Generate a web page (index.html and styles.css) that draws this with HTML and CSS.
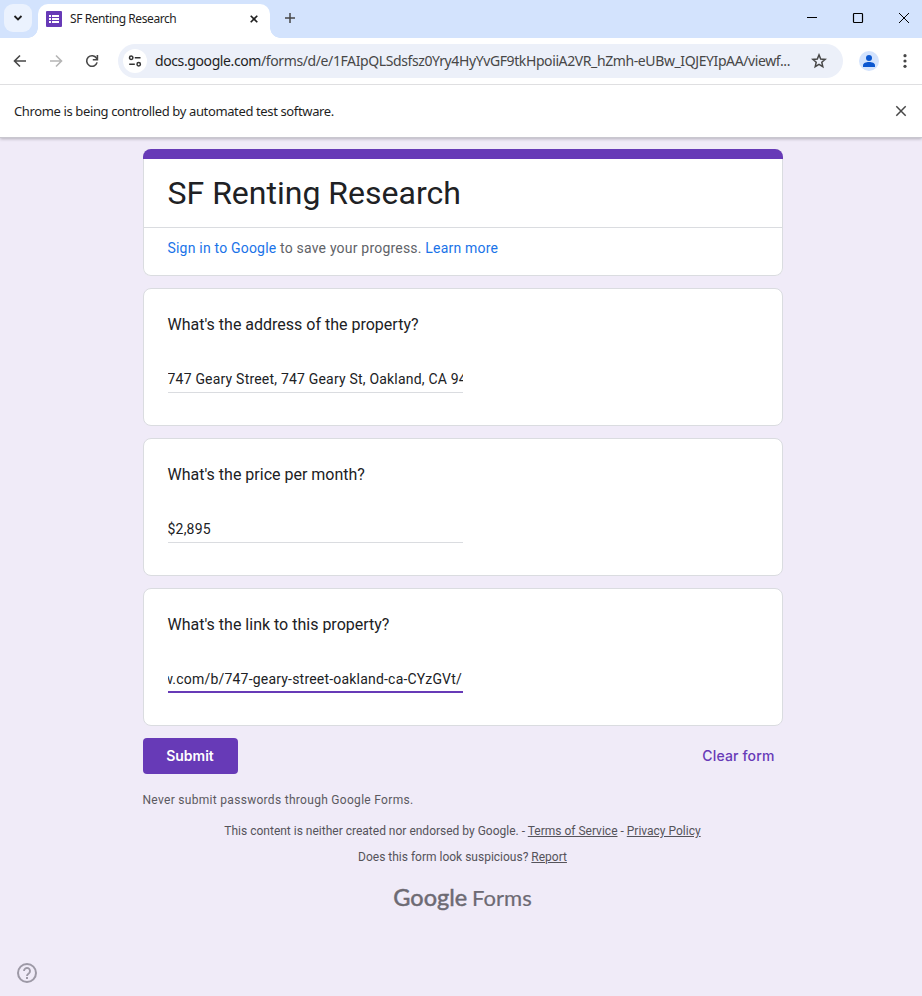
FILE: index.html
```html
<!DOCTYPE html>
<html lang="en">
<head>
<meta charset="utf-8">
<title>SF Renting Research</title>
<link rel="stylesheet" href="styles.css">
</head>
<body>
<header class="browser">
  <div class="tabstrip">
    <button class="tab-search" aria-label="Search tabs"><svg width="10" height="6" viewBox="0 0 10 6"><path d="M1.500 1 5 4.400 8.500 1" fill="none" stroke="#1f1f1f" stroke-width="1.800"/></svg></button>
    <div class="tab">
      <svg class="favicon" width="16" height="16" viewBox="0 0 16 16"><rect width="16" height="16" rx="1" fill="#673ab7"/><path d="M3 4h2v2H3zM6 4h7v2H6zM3 7h2v2H3zM6 7h7v2H6zM3 10h2v2H3zM6 10h7v2H6z" fill="#fff"/></svg>
      <span class="tab-title">SF Renting Research</span>
      <svg class="tab-close" width="8" height="8" viewBox="0 0 8 8"><path d="m.7.7 6.600 6.600M7.300.7.7 7.300" stroke="#1f1f1f" stroke-width="1.600"/></svg>
    </div>
    <svg class="new-tab" width="12" height="12" viewBox="0 0 12 12"><path d="M6 1v10M1 6h10" stroke="#474747" stroke-width="1.500"/></svg>
    <div class="window-controls">
      <svg width="12" height="12" viewBox="0 0 12 12"><path d="M1 5.500h10" stroke="#000"/></svg>
      <svg width="12" height="12" viewBox="0 0 12 12"><rect x="1.500" y="1.500" width="9" height="9" rx=".8" fill="none" stroke="#000" stroke-width="1.200"/></svg>
      <svg width="12" height="12" viewBox="0 0 12 12"><path d="m1 1 10 10M11 1 1 11" stroke="#000"/></svg>
    </div>
  </div>
  <div class="toolbar">
    <svg class="nav" width="14" height="14" viewBox="0 0 14 14"><path d="M13 7H2M7 1.500 1.500 7 7 12.500" fill="none" stroke="#474747" stroke-width="1.600"/></svg>
    <svg class="nav" width="14" height="14" viewBox="0 0 14 14"><path d="M1 7h11M7 1.500 12.500 7 7 12.500" fill="none" stroke="#b5b5b5" stroke-width="1.600"/></svg>
    <svg class="nav" width="14" height="14" viewBox="0 0 14 14"><path d="M12.100 8.400A5.300 5.300 0 1 1 11.500 4.200L12.300 5.200" fill="none" stroke="#474747" stroke-width="1.600"/><path d="M12.400 1v4.700H7.800" fill="none" stroke="#474747" stroke-width="1.600"/></svg>
    <div class="omnibox">
      <span class="site-info"><svg width="14" height="14" viewBox="0 0 14 14" fill="none" stroke="#333" stroke-width="1.500"><circle cx="3.200" cy="3.800" r="1.700"/><path d="M6.800 3.800h5.700M1.200 10.200h5.600"/><circle cx="10.700" cy="10.200" r="1.700"/></svg></span>
      <span class="url"><b>docs.google.com</b>/forms/d/e/1FAIpQLSdsfsz0Yry4HyYvGF9tkHpoiiA2VR_hZmh-eUBw_IQJEYIpAA/viewf...</span>
      <svg class="star" width="16" height="16" viewBox="0 0 16 16"><path d="m8 1.900 1.700 4.100 4.500.4-3.400 2.900 1 4.400L8 11.400l-3.800 2.300 1-4.400-3.400-2.900 4.500-.4z" fill="none" stroke="#474747" stroke-width="1.500"/></svg>
    </div>
    <svg class="avatar" width="20" height="20" viewBox="0 0 20 20"><circle cx="10" cy="10" r="10" fill="#d3e3fd"/><circle cx="10" cy="7" r="3" fill="#0b57d0"/><path d="M4 16v-1.700C4 12.200 7 11 10 11s6 1.200 6 3.300V16z" fill="#0b57d0"/></svg>
    <svg class="kebab" width="4" height="14" viewBox="0 0 4 14" fill="#474747"><circle cx="2" cy="1.700" r="1.600"/><circle cx="2" cy="7" r="1.600"/><circle cx="2" cy="12.300" r="1.600"/></svg>
  </div>
  <div class="infobar">
    <span class="infobar-text">Chrome is being controlled by automated test software.</span>
    <svg width="12" height="12" viewBox="0 0 12 12"><path d="m1.300 1.300 9.400 9.400M10.700 1.300l-9.400 9.400" stroke="#474747" stroke-width="1.500"/></svg>
  </div>
</header>
<main class="form">
  <section class="card title-card">
    <h1>SF Renting Research</h1>
    <p><a>Sign in to Google</a> to save your progress. <a>Learn more</a></p>
  </section>
  <section class="card question">
    <h2>What's the address of the property?</h2>
    <div class="field">747 Geary Street, 747 Geary St, Oakland, CA 94</div>
  </section>
  <section class="card question">
    <h2>What's the price per month?</h2>
    <div class="field">$2,895</div>
  </section>
  <section class="card question">
    <h2>What's the link to this property?</h2>
    <div class="field focused"><span>w.com/b/747-geary-street-oakland-ca-CYzGVt/</span></div>
  </section>
  <div class="actions">
    <button class="submit">Submit</button>
    <button class="clear">Clear form</button>
  </div>
  <p class="warning">Never submit passwords through Google Forms.</p>
  <footer>
    <p>This content is neither created nor endorsed by Google. - <u>Terms of Service</u> - <u>Privacy Policy</u></p>
    <p>Does this form look suspicious? <u>Report</u></p>
    <div class="logo"><span class="logo-google">Google</span><span class="logo-forms">Forms</span></div>
  </footer>
</main>
<svg class="help" width="22" height="22" viewBox="0 0 22 22"><circle cx="11" cy="11" r="9" fill="none" stroke="#9d99a6" stroke-width="2"/><path d="M8 9a3 3 0 1 1 5.100 2.100C12 12.100 11 12.500 11 14" fill="none" stroke="#9d99a6" stroke-width="1.900"/><rect x="10" y="15" width="2" height="2" fill="#9d99a6"/></svg>
</body>
</html>
```

FILE: styles.css
```css
* { box-sizing: border-box; }
body {
  margin: 0;
  height: 996px;
  overflow: hidden;
  background: #f0ebf8;
  color: #202124;
  font-family: Roboto, "Liberation Sans", sans-serif;
}
svg { display: block; flex: none; }
button { border: 0; padding: 0; background: none; font: inherit; }
h1, h2, p { margin: 0; font-weight: 400; }

.browser {
  position: relative;
  height: 138px;
  background: #fff;
  font-family: "Noto Sans", "Open Sans", sans-serif;
  color: #1f1f1f;
  border-bottom: 1px solid #c9c7cf;
  box-shadow: 0 1px 3px rgba(0, 0, 0, .25);
}
.tabstrip { display: flex; height: 38px; background: #d3e3fd; }
.tab-search {
  display: grid;
  place-items: center;
  width: 28px;
  height: 28px;
  margin: 4px 0 0 4px;
  border-radius: 9px;
  background: #ebf2fe;
}
.tab {
  position: relative;
  display: flex;
  align-items: center;
  width: 232px;
  height: 34px;
  margin: 4px 0 0 6px;
  padding: 0 12px 4px 8px;
  border-radius: 10px 10px 0 0;
  background: #fff;
}
.tab::before, .tab::after {
  content: "";
  position: absolute;
  bottom: 0;
  width: 10px;
  height: 10px;
}
.tab::before { left: -10px; background: radial-gradient(circle at 0 0, transparent 9.500px, #fff 10px); }
.tab::after { right: -10px; background: radial-gradient(circle at 100% 0, transparent 9.500px, #fff 10px); }
.tab-title {
  flex: 1;
  margin-left: 8px;
  padding-bottom: 2px;
  font-size: 12px;
  letter-spacing: -.42px;
  white-space: nowrap;
}
.new-tab { margin: 12px 0 0 14px; }
.window-controls { display: flex; gap: 34px; margin: 12px 12px 0 auto; }

.toolbar {
  display: flex;
  align-items: center;
  height: 47px;
  padding: 0 15px 1px 13px;
  border-bottom: 1px solid #dfdfe1;
}
.nav { margin-right: 22px; }
.omnibox {
  display: flex;
  align-items: center;
  width: 725px;
  height: 34px;
  margin-left: -3px;
  padding: 0 16px 0 5px;
  border-radius: 17px;
  background: #ecf0f9;
}
.site-info {
  display: grid;
  place-items: center;
  width: 24px;
  height: 24px;
  border-radius: 50%;
  background: #fff;
}
.url {
  flex: 1;
  margin-left: 8px;
  font-size: 14px;
  letter-spacing: -.395px;
  white-space: nowrap;
  color: #474747;
}
.url b { font-weight: 400; color: #1f1f1f; }
.avatar { margin-left: 16px; }
.kebab { margin-left: auto; }
.infobar {
  display: flex;
  align-items: center;
  justify-content: space-between;
  height: 52px;
  padding: 0 15px 0 14px;
}
.infobar-text { font-size: 13px; letter-spacing: -.37px; white-space: nowrap; }

.form { width: 640px; margin: 11px 0 0 142.5px; }
.card {
  margin-bottom: 12px;
  border: 1px solid #dadce0;
  border-radius: 8px;
  background: #fff;
  overflow: hidden;
}
.title-card { height: 127px; border: 0; box-shadow: inset 0 0 0 1px #dadce0; }
.title-card::before { content: ""; display: block; height: 10px; background: #673ab7; }
.title-card h1 {
  height: 69px;
  padding: 13px 25px 0;
  border-bottom: 1px solid #dadce0;
  font-size: 32px;
  line-height: 43px;
}
.title-card p {
  padding: 10px 25px;
  font-size: 14px;
  line-height: 20px;
  letter-spacing: .2px;
  color: #5f6368;
}
.title-card a { color: #1a73e8; }
.question { height: 138px; padding: 24px; }
.question h2 { font-size: 16px; line-height: 24px; }
.field {
  width: 295.5px;
  height: 26px;
  margin-top: 30px;
  border-bottom: 1px solid #dadce0;
  overflow: hidden;
  white-space: nowrap;
  font-size: 14px;
  line-height: 24px;
  letter-spacing: .2px;
}
.focused {
  display: flex;
  justify-content: flex-end;
  padding-right: 1px;
  border-bottom: 2px solid #673ab7;
}
.actions { display: flex; justify-content: space-between; font-family: Inter, Roboto, sans-serif; font-size: 14px; }
.submit { width: 95px; height: 36px; padding-bottom: 1px; border-radius: 4px; background: #673ab7; color: #fff; font-weight: 600; }
.clear { padding: 0 8px 1px 0; color: #673ab7; font-weight: 500; letter-spacing: .15px; }
.warning { margin-top: 18px; font-size: 12px; line-height: 16px; letter-spacing: .3px; color: #5b5960; }
footer { margin-top: 15px; text-align: center; font-size: 12px; line-height: 16px; color: #55535a; }
footer p + p { margin-top: 10px; }
.logo {
  display: flex;
  justify-content: center;
  align-items: baseline;
  gap: 5px;
  margin-top: 18px;
  font: 22px/28px Lato, sans-serif;
  color: #6d6a73;
}
.logo-google { font-size: 23.5px; -webkit-text-stroke: .5px #6d6a73; }
.logo-forms { -webkit-text-stroke: .2px #6d6a73; }
.help { position: absolute; left: 16px; top: 962px; }
```
